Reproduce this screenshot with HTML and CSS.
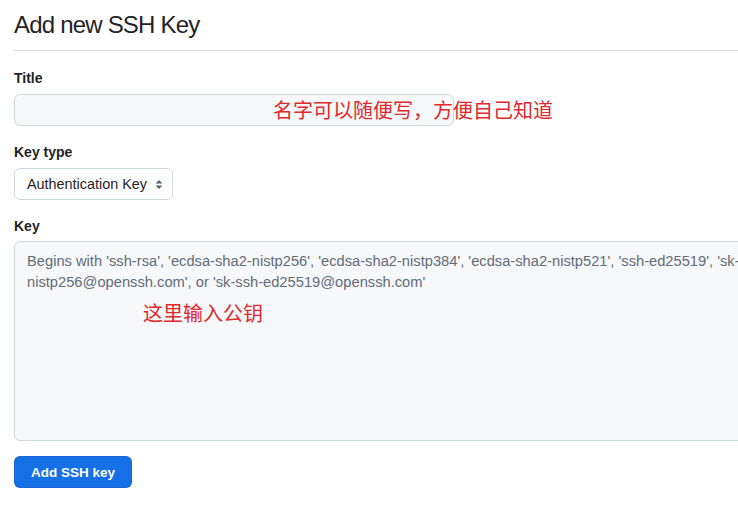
FILE: index.html
```html
<!DOCTYPE html>
<html lang="zh-CN">
<head>
<meta charset="utf-8">
<title>Add new SSH Key</title>
<link rel="stylesheet" href="styles.css">
</head>
<body>
<main class="page">
  <h1 class="page-title">Add new SSH Key</h1>
  <form class="ssh-form">
    <div class="field">
      <label class="field-label" for="title">Title</label>
      <div class="field-control">
        <input class="text-input" id="title" type="text">
        <span class="note note-title">名字可以随便写，方便自己知道</span>
      </div>
    </div>
    <div class="field">
      <label class="field-label" for="keytype">Key type</label>
      <div class="select-wrap">
        <select class="select" id="keytype">
          <option>Authentication Key</option>
          <option>Signing Key</option>
        </select>
        <svg class="select-caret" width="8" height="11" viewBox="0 0 8 11" aria-hidden="true">
          <path d="M4 1 L7.5 4.5 H0.5 Z" fill="#59636e"/>
          <path d="M4 10 L7.5 6.5 H0.5 Z" fill="#59636e"/>
        </svg>
      </div>
    </div>
    <div class="field">
      <label class="field-label" for="key">Key</label>
      <div class="field-control key-control">
        <textarea class="key-area" id="key" placeholder="Begins with 'ssh-rsa', 'ecdsa-sha2-nistp256', 'ecdsa-sha2-nistp384', 'ecdsa-sha2-nistp521', 'ssh-ed25519', 'sk-ecdsa-sha2-&#10;nistp256@openssh.com', or 'sk-ssh-ed25519@openssh.com'"></textarea>
        <span class="note note-key">这里输入公钥</span>
      </div>
    </div>
    <button class="btn-primary" type="button">Add SSH key</button>
  </form>
</main>
</body>
</html>
```
FILE: styles.css
```css
html, body {
  margin: 0;
  padding: 0;
  background: #ffffff;
  overflow: hidden;
}
body {
  font-family: "Liberation Sans", Arial, "Noto Sans CJK SC", sans-serif;
  color: #1f2328;
  font-size: 14px;
}
.page {
  padding: 7px 0 0 14px;
  overflow: hidden;
}
.page-title {
  margin: 0;
  font-size: 24px;
  font-weight: 400;
  line-height: 36px;
  letter-spacing: -0.8px;
  padding-bottom: 7px;
  border-bottom: 1px solid #d8dee4;
}
.ssh-form {
  display: flex;
  flex-direction: column;
  align-items: flex-start;
  padding-top: 17px;
}
.field {
  display: flex;
  flex-direction: column;
  margin-bottom: 16px;
}
.field:last-of-type {
  margin-bottom: 15px;
  align-self: stretch;
}
.field-label {
  font-weight: 700;
  font-size: 14px;
  line-height: 20px;
  margin-bottom: 6px;
}
.field:last-of-type .field-label {
  margin-bottom: 5px;
}
.field-control {
  position: relative;
}
.key-control {
  overflow: hidden;
}
.text-input {
  box-sizing: border-box;
  width: 440px;
  height: 32px;
  border: 1px solid #d0d7de;
  border-radius: 6px;
  background: #f6f8fa;
  padding: 5px 12px;
  font: inherit;
  display: block;
}
.select-wrap {
  position: relative;
  width: 159px;
}
.select {
  -webkit-appearance: none;
  appearance: none;
  box-sizing: border-box;
  width: 159px;
  height: 32px;
  border: 1px solid #d0d7de;
  border-radius: 6px;
  background: #ffffff;
  padding: 0 12px;
  font-family: "Liberation Sans", Arial, sans-serif;
  font-size: 14.4px;
  color: #1f2328;
  display: block;
}
.select-caret {
  position: absolute;
  right: 10px;
  top: 11px;
  pointer-events: none;
}
.key-area {
  box-sizing: border-box;
  display: block;
  width: 1200px;
  height: 200px;
  border: 1px solid #d0d7de;
  border-radius: 6px;
  background: #f6f8fa;
  padding: 9px 12px;
  font-family: "Liberation Sans", Arial, sans-serif;
  font-size: 14.7px;
  line-height: 21px;
  resize: none;
}
.key-area::placeholder {
  color: #636c76;
}
.note {
  position: absolute;
  color: #e0282e;
  font-family: "Noto Sans CJK SC", sans-serif;
  font-size: 20px;
  line-height: 22px;
  white-space: nowrap;
}
.note-title {
  left: 259px;
  top: 5px;
}
.note-key {
  left: 129px;
  top: 61px;
}
.btn-primary {
  box-sizing: border-box;
  height: 32px;
  padding: 0 16px;
  border: 1px solid rgba(31, 35, 40, 0.1);
  border-radius: 6px;
  background: #1570e6;
  color: #ffffff;
  font-family: "Liberation Sans", Arial, sans-serif;
  font-weight: 700;
  font-size: 13.5px;
}
```
